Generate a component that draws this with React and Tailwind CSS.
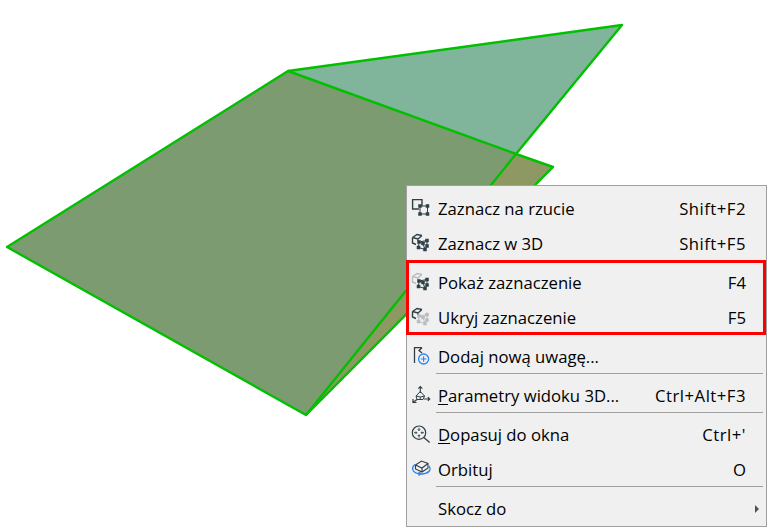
import React from 'react';

const dark = '#2f3f48';

function Cube({ color }) {
  return (
    <path d="M1.5 3.5 L6 0.5 L11 1.5 M1.5 3.5 L1.5 9 L5 10.5 M1.5 3.5 L7 5 L11 1.5 M7 5 L7 7" fill="none" stroke={color} strokeWidth="1.4" />
  );
}

function HandleCube({ color }) {
  const pts = [[8, 8], [16, 6.5], [7.5, 13.5], [14, 15.5], [12, 9.5], [16, 12]];
  return (
    <g>
      <path d="M8 8 L16 6.5 L16 12 L14 15.5 L7.5 13.5 Z M8 8 L12 9.5 L16 6.5 M12 9.5 L14 15.5" fill="none" stroke={color} strokeWidth="1" />
      {pts.map(([x, y]) => (
        <rect key={`${x}-${y}`} x={x - 1.75} y={y - 1.75} width="3.5" height="3.5" fill={color} />
      ))}
    </g>
  );
}

function Icon({ children }) {
  return (
    <svg width="20" height="20" viewBox="0 0 20 20" className="ml-1 mr-[7px] shrink-0 overflow-visible">
      {children}
    </svg>
  );
}

const icons = {
  plan: (
    <>
      <path d="M11 7 V0.6 H1.6 V10 H8" fill="none" stroke={dark} strokeWidth="1.4" />
      <path d="M9 7 H16.5 V15 H9 Z" fill="none" stroke={dark} strokeWidth="1" />
      {[[9, 7], [16.5, 7], [9, 15], [16.5, 15]].map(([x, y]) => (
        <rect key={`${x}-${y}`} x={x - 1.75} y={y - 1.75} width="3.5" height="3.5" fill={dark} />
      ))}
    </>
  ),
  select3d: (
    <>
      <Cube color={dark} />
      <HandleCube color={dark} />
    </>
  ),
  show: (
    <>
      <Cube color="#b9bdbf" />
      <HandleCube color={dark} />
    </>
  ),
  hide: (
    <>
      <Cube color={dark} />
      <HandleCube color="#b9bdbf" />
    </>
  ),
  note: (
    <>
      <path d="M3.5 16 V0.7 H11 M11 0.7 L8 3.5 L11 6" fill="none" stroke={dark} strokeWidth="1.3" />
      <circle cx="12.6" cy="12" r="5" fill="#f0f0f0" stroke="#2f86e6" strokeWidth="1.3" />
      <path d="M12.6 9.2 V14.8 M9.8 12 H15.4" stroke="#2f86e6" strokeWidth="1.2" />
    </>
  ),
  view: (
    <>
      <path d="M9.3 7 V0.5 M7.3 2.6 L9.3 0.5 L11.3 2.6" fill="none" stroke={dark} strokeWidth="1.1" />
      <path d="M9.3 5.5 L13.5 10 L12 13.5 L6 13.5 L5 10 Z M5 10 L9.5 11 L13.5 10 M9.5 11 L9 13.5" fill="none" stroke={dark} strokeWidth="1" />
      <path d="M6 13.5 L2 16.5 M2 13 V16.5 H5.5" fill="none" stroke={dark} strokeWidth="1.2" />
      <path d="M13 13 L18.5 13 M16.8 11.2 L18.7 13 L16.8 14.8" fill="none" stroke={dark} strokeWidth="1.2" />
    </>
  ),
  fit: (
    <>
      <circle cx="8" cy="7.7" r="6.7" fill="none" stroke={dark} strokeWidth="1.2" />
      <path d="M12.8 12.5 L18.7 17.5" stroke={dark} strokeWidth="1.3" />
      <path d="M8 2.8 V5.4 M6.8 4.4 L8 5.6 L9.2 4.4 M8 12.6 V10 M6.8 11 L8 9.8 L9.2 11 M3.1 7.7 H5.7 M4.7 6.5 L5.9 7.7 L4.7 8.9 M12.9 7.7 H10.3 M11.3 6.5 L10.1 7.7 L11.3 8.9" fill="none" stroke={dark} strokeWidth="1" />
    </>
  ),
  orbit: (
    <>
      <path d="M4.5 5 L10.5 1 L17 3.5 L17 8 L11 12 L4.5 9 Z M4.5 5 L11 8 L17 3.5 M11 8 V12" fill="none" stroke={dark} strokeWidth="1.1" />
      <path d="M4 4.5 C0 7.5 1 12 7 13.5 C12 14.8 18 13.5 19 9.5 C19.3 8 18.8 7 18 6 M7.5 15.5 L10 13.8 L7.8 12" fill="none" stroke="#2f86e6" strokeWidth="1.3" />
    </>
  ),
};

function Row({ icon, label, accel, shortcut, arrow }) {
  const rest = accel ? label.slice(1) : label;
  return (
    <div className="flex h-[35px] items-center pr-5">
      {icon ? <Icon>{icons[icon]}</Icon> : <div className="ml-1 mr-[7px] w-5 shrink-0" />}
      <span className="flex-1 whitespace-nowrap">
        {accel && <span className="underline underline-offset-2">{label[0]}</span>}
        {rest}
      </span>
      {shortcut && (
        <span className={shortcut.includes('+') ? 'whitespace-nowrap tracking-[0.5px]' : 'whitespace-nowrap'}>
          {shortcut}
        </span>
      )}
      {arrow && <span className="-mr-[13px] h-0 w-0 border-y-[4px] border-l-[4px] border-y-transparent border-l-[#505050]" />}
    </div>
  );
}

function Separator() {
  return (
    <div className="flex h-1 items-start pl-[29px] pr-[3px]">
      <div className="-mt-px h-px w-full bg-[#a0a0a0]" />
    </div>
  );
}

export default function App() {
  return (
    <div className="relative h-[527px] w-[767px] overflow-hidden bg-white font-['Open_Sans','Liberation_Sans',sans-serif] text-[16.7px] text-black">
      {/* 3D model */}
      <svg width="767" height="527" viewBox="0 0 767 527" className="absolute inset-0">
        <polygon points="288,71 622,25 516,154" fill="#80b49b" />
        <polygon points="516,154 553,167 306,415" fill="#8e9863" />
        <polygon points="7,247 288,71 516,154 306,415" fill="#7c9b71" />
        <g fill="none" stroke="#00c000" strokeWidth="2.4" strokeLinejoin="round">
          <polyline points="288,71 622,25 516,154" />
          <polygon points="7,247 288,71 516,154 306,415" />
          <polyline points="516,154 553,167 306,415" />
        </g>
      </svg>

      {/* context menu */}
      <div className="absolute left-[406px] top-[185px] h-[342px] w-[361px] border border-[#a0a0a0] bg-[#f0f0f0] pt-[5px]">
        <Row icon="plan" label="Zaznacz na rzucie" shortcut="Shift+F2" />
        <Row icon="select3d" label="Zaznacz w 3D" shortcut="Shift+F5" />
        <Separator />
        <Row icon="show" label="Pokaż zaznaczenie" shortcut="F4" />
        <Row icon="hide" label="Ukryj zaznaczenie" shortcut="F5" />
        <Separator />
        <Row icon="note" label="Dodaj nową uwagę..." />
        <Separator />
        <Row icon="view" label="Parametry widoku 3D..." accel shortcut="Ctrl+Alt+F3" />
        <Separator />
        <Row icon="fit" label="Dopasuj do okna" accel shortcut="Ctrl+'" />
        <Row icon="orbit" label="Orbituj" shortcut="O" />
        <Separator />
        <Row label="Skocz do" arrow />
        <div className="absolute -left-px top-[74px] h-[75px] w-[360px] border-[3px] border-[#ff0000]" />
      </div>
    </div>
  );
}
